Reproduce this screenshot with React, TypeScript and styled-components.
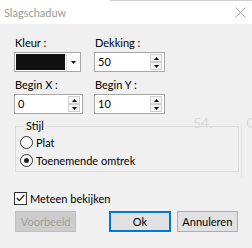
import React from "react";
import styled, { createGlobalStyle } from "styled-components";

const Global = createGlobalStyle`
  html, body { margin: 0; padding: 0; background: #f0f0f0; }
  body { font-family: "Lato", "Liberation Sans", sans-serif; font-size: 11px; color: #000; }
`;

const Window = styled.div`
  position: relative;
  width: 252px;
  height: 248px;
  background: #f0f0f0;
  overflow: hidden;
  display: flex;
  flex-direction: column;
`;

const TitleBar = styled.div`
  position: relative;
  height: 24px;
  background: #fff;
  display: flex;
  align-items: center;
  justify-content: space-between;
  padding: 0 6px 0 4px;
  color: #9a9a9a;
  font-size: 11px;
  &::before {
    content: "";
    position: absolute;
    top: 0;
    left: 110px;
    right: 0;
    height: 1px;
    background: #cfcfcf;
  }
`;

const Body = styled.div`
  padding: 12px 14px 0 14px;
  display: flex;
  flex-direction: column;
`;

const FieldGrid = styled.div`
  display: grid;
  grid-template-columns: 80px 72px;
  row-gap: 6px;
`;

const Field = styled.div`
  display: flex;
  flex-direction: column;
  gap: 2px;
`;

const Label = styled.div`
  height: 14px;
  line-height: 14px;
  padding-left: 1px;
`;

const InputBox = styled.div<{ $w: number }>`
  width: ${(p) => p.$w}px;
  height: 20px;
  box-sizing: border-box;
  border: 1px solid #a8a8a8;
  background: #fff;
  display: flex;
  align-items: stretch;
`;

const InputText = styled.div`
  flex: 1;
  padding-left: 3px;
  line-height: 18px;
`;

const Spin = styled.div`
  width: 12px;
  margin: 1px 2px 1px 0;
  display: flex;
  flex-direction: column;
`;

const SpinBtn = styled.div`
  flex: 1;
  box-sizing: border-box;
  border: 1px solid #d0d0d0;
  background: #f4f4f4;
  display: flex;
  align-items: center;
  justify-content: center;
`;

const ColorSwatch = styled.div`
  flex: 1;
  margin: 1px;
  background: #111;
`;

const DropBtn = styled.div`
  width: 12px;
  margin: 1px 1px 1px 0;
  background: #fbfbfb;
  border-left: 1px solid #dcdcdc;
  display: flex;
  align-items: center;
  justify-content: center;
`;

const Group = styled.fieldset`
  margin: 6px 0 0 1px;
  width: 224px;
  height: 52px;
  box-sizing: border-box;
  border: 1px solid #dcdcdc;
  padding: 1px 0 0 4px;
  position: relative;
`;

const Legend = styled.legend`
  padding: 0 2px;
  margin-left: 4px;
  line-height: 12px;
  font-size: 11px;
`;

const RadioRow = styled.label`
  display: flex;
  align-items: center;
  gap: 3px;
  height: 18px;
`;

const RadioCircle = styled.span<{ $on?: boolean }>`
  width: 11px;
  height: 11px;
  border-radius: 50%;
  border: 1px solid #333;
  background: #fff;
  display: flex;
  align-items: center;
  justify-content: center;
  &::after {
    content: "";
    width: 5px;
    height: 5px;
    border-radius: 50%;
    background: ${(p) => (p.$on ? "#222" : "transparent")};
  }
`;

const CheckRow = styled.div`
  margin-top: 18px;
  display: flex;
  align-items: center;
  gap: 3px;
  height: 16px;
`;

const CheckBox = styled.span`
  width: 11px;
  height: 11px;
  border: 1px solid #333;
  background: #fff;
  display: flex;
  align-items: center;
  justify-content: center;
`;

const ButtonRow = styled.div`
  margin-top: 5px;
  display: flex;
`;

const Button = styled.div<{ $variant?: "disabled" | "default" | "normal"; $ml?: number }>`
  width: 62px;
  height: 21px;
  box-sizing: border-box;
  margin-left: ${(p) => p.$ml ?? 0}px;
  display: flex;
  align-items: center;
  justify-content: center;
  background: ${(p) => (p.$variant === "disabled" ? "#cccccc" : "#e1e1e1")};
  color: ${(p) => (p.$variant === "disabled" ? "#a0a0a0" : "#000")};
  border: ${(p) =>
    p.$variant === "default"
      ? "2px solid #0078d7"
      : p.$variant === "disabled"
      ? "1px solid #bfbfbf"
      : "1px solid #adadad"};
`;

const Ghost = styled.div<{ $x: number; $y: number }>`
  position: absolute;
  left: ${(p) => p.$x}px;
  top: ${(p) => p.$y}px;
  color: #dadada;
  font-size: 14px;
  line-height: 14px;
`;

const GhostLine = styled.div`
  position: absolute;
  left: 241px;
  top: 124px;
  width: 1px;
  height: 54px;
  background: #e4e4e4;
`;

const UpArrow = () => (
  <svg width="5" height="3" viewBox="0 0 5 3">
    <path d="M0 3 L2.5 0 L5 3 Z" fill="#111" />
  </svg>
);
const DownArrow = () => (
  <svg width="5" height="3" viewBox="0 0 5 3">
    <path d="M0 0 L2.5 3 L5 0 Z" fill="#111" />
  </svg>
);

const SpinInput = ({ value, w }: { value: string; w: number }) => (
  <InputBox $w={w}>
    <InputText>{value}</InputText>
    <Spin>
      <SpinBtn>
        <UpArrow />
      </SpinBtn>
      <SpinBtn>
        <DownArrow />
      </SpinBtn>
    </Spin>
  </InputBox>
);

export default function App() {
  return (
    <>
      <Global />
      <Window>
        <TitleBar>
          <span>Slagschaduw</span>
          <svg width="11" height="11" viewBox="0 0 11 11">
            <path d="M0.5 0.5 L10.5 10.5 M10.5 0.5 L0.5 10.5" stroke="#a8a8a8" strokeWidth="1" />
          </svg>
        </TitleBar>
        <Body>
          <FieldGrid>
            <Field>
              <Label>Kleur :</Label>
              <InputBox $w={67}>
                <ColorSwatch />
                <DropBtn>
                  <DownArrow />
                </DropBtn>
              </InputBox>
            </Field>
            <Field>
              <Label>Dekking :</Label>
              <SpinInput value="50" w={71} />
            </Field>
            <Field>
              <Label>Begin X :</Label>
              <SpinInput value="0" w={69} />
            </Field>
            <Field>
              <Label>Begin Y :</Label>
              <SpinInput value="10" w={71} />
            </Field>
          </FieldGrid>
          <Group>
            <Legend>Stijl</Legend>
            <RadioRow>
              <RadioCircle />
              Plat
            </RadioRow>
            <RadioRow>
              <RadioCircle $on />
              Toenemende omtrek
            </RadioRow>
          </Group>
          <CheckRow>
            <CheckBox>
              <svg width="9" height="8" viewBox="0 0 9 8">
                <path d="M0.8 4 L3.3 6.6 L8.3 0.8" stroke="#111" strokeWidth="1.1" fill="none" />
              </svg>
            </CheckBox>
            Meteen bekijken
          </CheckRow>
          <ButtonRow>
            <Button $variant="disabled" $ml={1}>Voorbeeld</Button>
            <Button $variant="default" $ml={33}>Ok</Button>
            <Button $ml={6}>Annuleren</Button>
          </ButtonRow>
        </Body>
        <Ghost $x={193} $y={116}>54.</Ghost>
        <Ghost $x={246} $y={116}>C</Ghost>
        <GhostLine />
      </Window>
    </>
  );
}
